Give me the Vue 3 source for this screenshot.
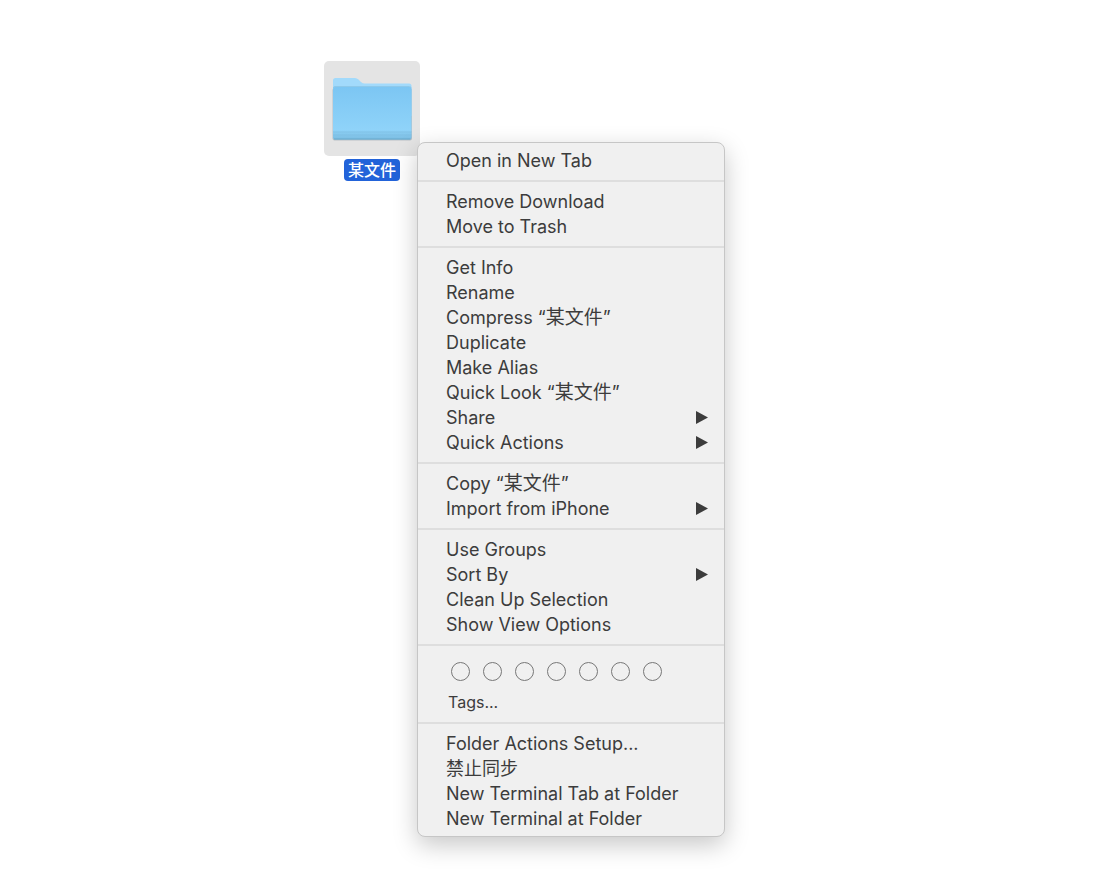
<script setup>
const folderName = '某文件'

const groups = [
  [{ label: 'Open in New Tab' }],
  [{ label: 'Remove Download' }, { label: 'Move to Trash' }],
  [
    { label: 'Get Info' },
    { label: 'Rename' },
    { label: 'Compress', target: folderName },
    { label: 'Duplicate' },
    { label: 'Make Alias' },
    { label: 'Quick Look', target: folderName },
    { label: 'Share', submenu: true },
    { label: 'Quick Actions', submenu: true }
  ],
  [{ label: 'Copy', target: folderName }, { label: 'Import from iPhone', submenu: true }],
  [
    { label: 'Use Groups' },
    { label: 'Sort By', submenu: true },
    { label: 'Clean Up Selection' },
    { label: 'Show View Options' }
  ]
]

const tagColors = ['Red', 'Orange', 'Yellow', 'Green', 'Blue', 'Purple', 'Gray']

const services = [
  'Folder Actions Setup...',
  '禁止同步',
  'New Terminal Tab at Folder',
  'New Terminal at Folder'
]
</script>

<template>
  <main class="finder">
    <div class="file">
      <div class="thumb">
        <svg class="folder" viewBox="0 0 84 68" aria-hidden="true">
          <defs>
            <linearGradient id="front" x1="0" y1="0" x2="0" y2="1">
              <stop offset="0" stop-color="#7cc6f3" />
              <stop offset="0.82" stop-color="#8fd3f9" />
              <stop offset="0.87" stop-color="#88cbf0" />
              <stop offset="1" stop-color="#7bbde2" />
            </linearGradient>
          </defs>
          <rect x="2.500" y="12" width="79.500" height="52.500" rx="2" fill="#b9c0c5" />
          <path
            d="M3 4.500Q3 2 5.500 2H25Q27 2 28.500 3.500L31 6Q32.500 7.500 35 7.500H79Q81.500 7.500 81.500 10V40H3Z"
            fill="#a2dafb"
          />
          <path d="M3.500 12Q3.500 10.500 5 10.500H79.500Q81 10.500 81 12" fill="none" stroke="#8ec9ea" />
          <rect x="3" y="11" width="78.500" height="52.500" rx="2" fill="url(#front)" />
          <path d="M3 56H81.500M3 59H81.500" stroke="#7dbde0" stroke-width="0.600" />
          <path d="M4 63H80.500" stroke="#69a9cc" />
        </svg>
      </div>
      <span class="name">{{ folderName }}</span>

      <div class="menu" role="menu">
        <div v-for="(group, i) in groups" :key="i" class="group" role="group">
          <button v-for="item in group" :key="item.label" class="item" type="button" role="menuitem">
            <span v-if="item.target">{{ item.label }} “<span class="han">{{ item.target }}</span>”</span>
            <span v-else>{{ item.label }}</span>
            <svg v-if="item.submenu" class="arrow" viewBox="0 0 12 13" aria-hidden="true">
              <path d="M0 0L12 6.500L0 13Z" fill="#3c3c3c" />
            </svg>
          </button>
        </div>
        <div class="group tags" role="group">
          <div class="dots">
            <button
              v-for="color in tagColors"
              :key="color"
              class="dot"
              type="button"
              role="menuitemcheckbox"
              aria-checked="false"
              :aria-label="color"
            ></button>
          </div>
          <button class="item tags-item" type="button" role="menuitem">Tags...</button>
        </div>
        <div class="group" role="group">
          <button v-for="label in services" :key="label" class="item" type="button" role="menuitem">
            {{ label }}
          </button>
        </div>
      </div>
    </div>
  </main>
</template>

<style>
body {
  margin: 0;
  background: #fff;
}
</style>

<style scoped>
.finder {
  box-sizing: border-box;
  min-height: 100vh;
  padding: 61px 0 0 324px;
  font-family: Inter, 'Noto Sans CJK SC', sans-serif;
}
.file {
  position: relative;
  display: inline-flex;
  flex-direction: column;
  align-items: center;
  gap: 3px;
}
.thumb {
  box-sizing: border-box;
  display: flex;
  justify-content: center;
  width: 96px;
  height: 95px;
  padding-top: 15px;
  border-radius: 5px;
  background: #e4e4e4;
}
.folder {
  width: 84px;
  height: 68px;
}
.name {
  padding: 0 4px;
  border-radius: 4px;
  background: #2263d9;
  color: #fff;
  font-size: 16px;
  font-weight: 500;
  line-height: 22px;
}
.menu {
  position: absolute;
  top: 81px;
  left: 93px;
  box-sizing: border-box;
  width: 308px;
  border: 1px solid #c6c6c6;
  border-radius: 8px;
  background: #f0f0f0;
  box-shadow: 0 8px 24px rgba(0, 0, 0, 0.22);
}
.group {
  padding: 7px 0;
}
.group:first-child {
  padding-top: 5px;
}
.group:last-child {
  padding-bottom: 5px;
}
.group + .group {
  border-top: 2px solid #dedede;
}
.item {
  display: flex;
  align-items: center;
  justify-content: space-between;
  width: 100%;
  height: 25px;
  padding: 0 16px 0 28px;
  border: 0;
  background: transparent;
  color: #3c3c3c;
  font-family: inherit;
  font-size: 18px;
  line-height: 25px;
  text-align: left;
  white-space: nowrap;
}
.han {
  font-size: 19px;
}
.arrow {
  width: 12px;
  height: 13px;
}
.group.tags {
  padding-top: 16px;
}
.dots {
  display: flex;
  gap: 13px;
  padding: 0 33px 9px;
}
.dot {
  box-sizing: border-box;
  width: 19px;
  height: 19px;
  padding: 0;
  border: 1px solid #777;
  border-radius: 50%;
  background: transparent;
}
.tags-item {
  padding-left: 30px;
  font-size: 16px;
}
</style>
